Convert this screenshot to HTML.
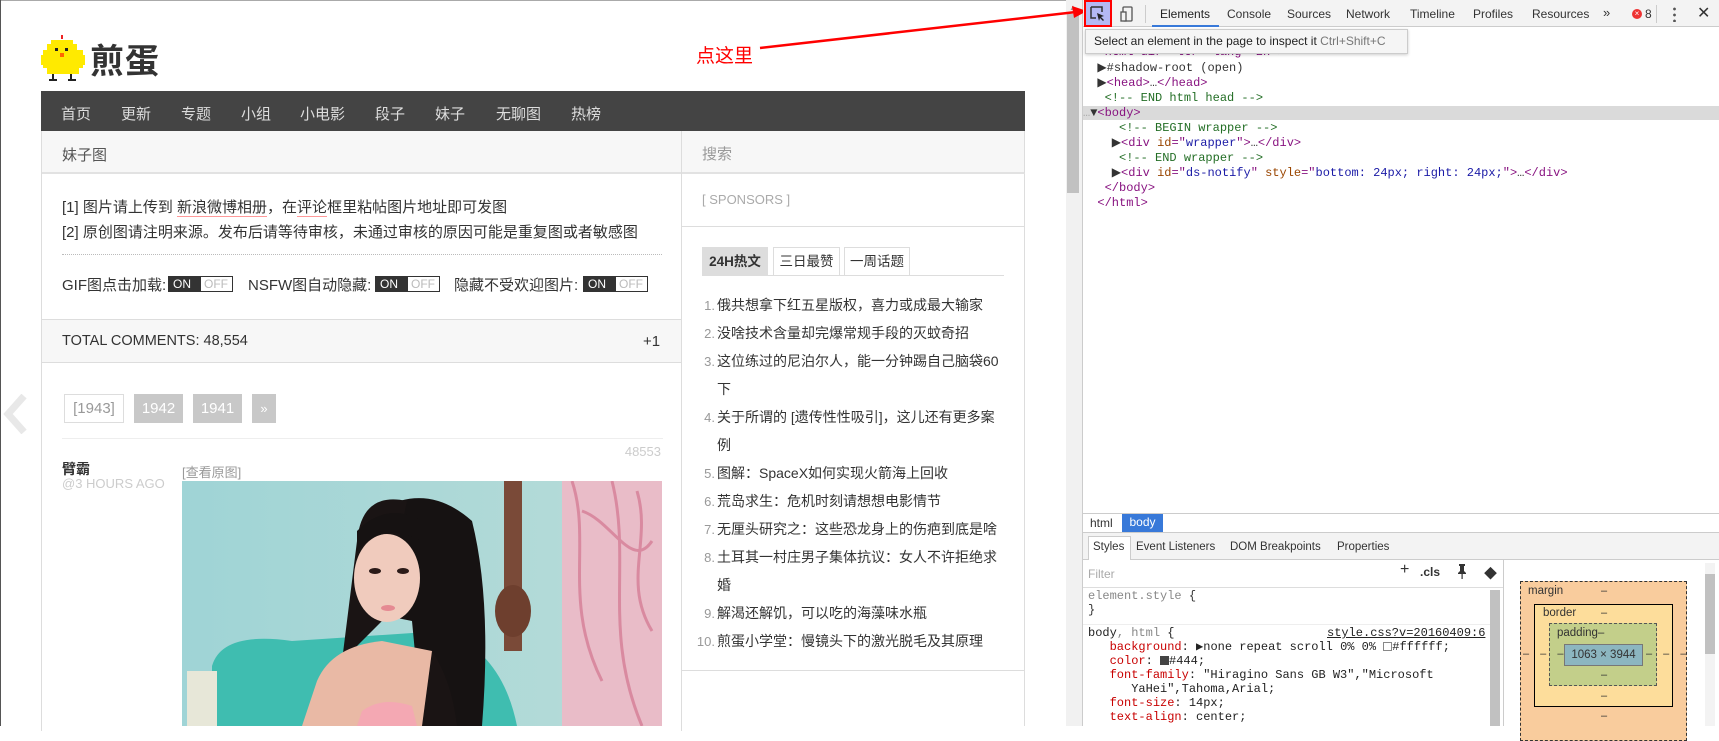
<!DOCTYPE html>
<html><head><meta charset="utf-8">
<style>
*{margin:0;padding:0;box-sizing:border-box}
body{width:1719px;height:726px;overflow:hidden;background:#fff;position:relative;font-family:"Liberation Sans","Noto Sans CJK SC",sans-serif;color:#333}
.a{position:absolute;white-space:nowrap}
.mono{font-family:"Liberation Mono","DejaVu Sans Mono",monospace;font-size:12px}
.nav span{position:absolute;top:12px;color:#ddd;font-size:15px}
.tg{position:absolute;top:276px;height:16px;width:65px;border:1px solid #333;font-size:12px;line-height:14px}
.tg b{position:absolute;left:0;top:0;width:32px;height:14px;background:#333;color:#fff;font-weight:normal;padding-left:4px}
.tg i{position:absolute;left:35px;top:0;color:#bbb;font-style:normal}
.pg{position:absolute;top:394px;height:29px;font-size:15px;line-height:29px;text-align:center;color:#fff;background:#c8c8c8}
.li{position:absolute;left:690px;width:320px;font-size:14px;line-height:28px;color:#333}
.li em{font-style:normal;color:#999;display:inline-block;width:27px;text-align:right;padding-right:2px;font-size:13px}
.dt{position:absolute;font-size:12px;color:#333;top:7px;font-family:"Liberation Sans",sans-serif}
.st{position:absolute;top:541px;font-size:11.5px;font-family:"Liberation Sans",sans-serif;color:#333}
.code{position:absolute;left:1083px;font-family:"Liberation Mono",monospace;font-size:12px;line-height:15px;white-space:pre}
.tag{color:#881280}.at{color:#994500}.av{color:#1a1aa6}.cm{color:#236e25}
.pr{color:#c80000}
</style></head><body>
<div class="a" style="left:0;top:0;width:1066px;height:1px;background:#aaa"></div>
<div class="a" style="left:0;top:0;width:1px;height:726px;background:#555"></div>

<svg class="a" style="left:41px;top:35px" width="44" height="47" viewBox="0 0 44 47">
<rect x="20" y="0" width="2" height="4" fill="#e22"/>
<rect x="10" y="5" width="22" height="4" fill="#ffea00"/>
<rect x="6" y="9" width="30" height="6" fill="#ffea00"/>
<rect x="2" y="15" width="40" height="18" fill="#ffea00"/>
<rect x="0" y="20" width="44" height="10" fill="#ffea00"/>
<rect x="6" y="33" width="32" height="6" fill="#ffea00"/>
<rect x="14" y="13" width="3" height="3" fill="#222"/><rect x="24" y="13" width="3" height="3" fill="#222"/>
<rect x="19" y="18" width="4" height="4" fill="#f60"/>
<rect x="11" y="39" width="2" height="6" fill="#222"/><rect x="29" y="39" width="2" height="6" fill="#222"/>
<rect x="8" y="44" width="8" height="2" fill="#222"/><rect x="27" y="44" width="8" height="2" fill="#222"/>
</svg>
<div class="a" style="left:90px;top:40px;font-size:34px;font-weight:bold;color:#333;letter-spacing:1px;line-height:44px">煎蛋</div>

<div class="a nav" style="left:41px;top:91px;width:984px;height:40px;background:#444">
<span style="left:20px">首页</span><span style="left:80px">更新</span><span style="left:140px">专题</span><span style="left:200px">小组</span><span style="left:259px">小电影</span><span style="left:334px">段子</span><span style="left:394px">妹子</span><span style="left:455px">无聊图</span><span style="left:530px">热榜</span>
</div>

<div class="a" style="left:41px;top:131px;width:641px;height:600px;border-left:1px solid #ddd;border-right:1px solid #ddd"></div>
<div class="a" style="left:42px;top:131px;width:639px;height:43px;background:#f7f7f7;border-bottom:2px solid #e2e2e2"></div>
<div class="a" style="left:62px;top:144px;font-size:15px;color:#555">妹子图</div>
<div class="a" style="left:62px;top:196px;font-size:15px;color:#333">[1] 图片请上传到 <span style="border-bottom:1px solid #f99">新浪微博相册</span>，在<span style="border-bottom:1px solid #f99">评论</span>框里粘帖图片地址即可发图</div>
<div class="a" style="left:62px;top:221px;font-size:15px;color:#333">[2] 原创图请注明来源。发布后请等待审核，未通过审核的原因可能是重复图或者敏感图</div>
<div class="a" style="left:62px;top:254px;width:600px;border-top:1px dotted #bbb"></div>
<div class="a" style="left:62px;top:274px;font-size:15px;color:#333">GIF图点击加载:</div>
<div class="tg" style="left:168px"><b>ON</b><i>OFF</i></div>
<div class="a" style="left:248px;top:274px;font-size:15px;color:#333">NSFW图自动隐藏:</div>
<div class="tg" style="left:375px"><b>ON</b><i>OFF</i></div>
<div class="a" style="left:454px;top:274px;font-size:15px;color:#333">隐藏不受欢迎图片:</div>
<div class="tg" style="left:583px"><b>ON</b><i>OFF</i></div>

<div class="a" style="left:42px;top:319px;width:639px;height:44px;background:#f7f7f7;border-top:1px solid #ddd;border-bottom:1px solid #ddd"></div>
<div class="a" style="left:62px;top:333px;font-size:14.5px;color:#333">TOTAL COMMENTS: 48,554</div>
<div class="a" style="left:643px;top:333px;font-size:15px;color:#333">+1</div>

<svg class="a" style="left:2px;top:394px" width="26" height="40"><path d="M22 2 L6 20 L22 38" stroke="#e8e8e8" stroke-width="7" fill="none"/></svg>
<div class="pg" style="left:64px;width:60px;background:#fff;border:1px solid #ddd;color:#999;line-height:27px">[1943]</div>
<div class="pg" style="left:134px;width:49px">1942</div>
<div class="pg" style="left:193px;width:49px">1941</div>
<div class="pg" style="left:252px;width:24px;font-size:13px">»</div>
<div class="a" style="left:62px;top:438px;width:601px;border-top:1px solid #eee"></div>
<div class="a" style="left:620px;top:444px;font-size:13px;color:#ccc;width:41px;text-align:right">48553</div>
<div class="a" style="left:62px;top:459px;font-size:14px;font-weight:bold;color:#333">臂霸</div>
<div class="a" style="left:62px;top:476px;font-size:13px;color:#ccc">@3 HOURS AGO</div>
<div class="a" style="left:182px;top:462px;font-size:13px;color:#999">[查看原图]</div>

<svg class="a" style="left:182px;top:481px" width="480" height="245" viewBox="0 0 480 245">
<defs><linearGradient id="w" x1="0" x2="1"><stop offset="0" stop-color="#9fd4d6"/><stop offset="1" stop-color="#b8dcd8"/></linearGradient></defs>
<rect width="480" height="245" fill="url(#w)"/>
<rect x="380" y="0" width="100" height="245" fill="#e9bcc8"/>
<path d="M390 0 C410 60 380 120 420 200 M430 0 C450 80 420 150 460 245 M400 30 C430 40 450 90 470 60 M455 10 C470 60 440 100 470 150" stroke="#d98aa0" stroke-width="3" fill="none"/>
<rect x="322" y="0" width="18" height="170" fill="#7a4a38"/>
<ellipse cx="331" cy="130" rx="18" ry="26" fill="#6e3f2e"/>
<path d="M30 185 Q40 150 110 160 L260 150 Q320 170 335 245 L30 245 Z" fill="#3fbdb0"/>
<rect x="5" y="190" width="30" height="55" fill="#e7e7d8"/>
<path d="M195 30 Q245 0 290 40 Q310 120 300 245 L240 245 L230 140 L180 130 Z" fill="#161212"/>
<path d="M175 60 Q180 10 225 20 L200 140 L160 180 Z" fill="#1a1414"/>
<ellipse cx="205" cy="97" rx="33" ry="44" fill="#f0cbbd"/>
<path d="M175 70 Q200 40 240 60 L240 40 Q205 20 175 50 Z" fill="#161212"/>
<ellipse cx="193" cy="90" rx="6" ry="3" fill="#2b1a18"/><ellipse cx="221" cy="90" rx="6" ry="3" fill="#2b1a18"/>
<ellipse cx="206" cy="127" rx="7" ry="3" fill="#e58a92"/>
<path d="M135 200 Q150 165 200 160 L250 170 L270 245 L120 245 Z" fill="#e9b9a5"/>
<path d="M250 170 Q270 200 275 245 L240 245 Z" fill="#1a1414"/>
<path d="M180 230 Q200 215 230 225 L235 245 L175 245 Z" fill="#f4a8b3"/>
</svg>

<div class="a" style="left:682px;top:131px;width:343px;height:43px;background:#f7f7f7;border-bottom:2px solid #e2e2e2;border-right:1px solid #ddd"></div>
<div class="a" style="left:702px;top:143px;font-size:15px;color:#999">搜索</div>
<div class="a" style="left:1024px;top:174px;width:1px;height:552px;background:#ddd"></div>
<div class="a" style="left:702px;top:192px;font-size:13px;color:#aaa">[ SPONSORS ]</div>
<div class="a" style="left:682px;top:226px;width:342px;border-top:1px solid #ddd"></div>
<div class="a" style="left:702px;top:275px;width:302px;border-top:1px solid #ddd"></div>
<div class="a" style="left:702px;top:247px;width:66px;height:29px;background:#ddd;font-size:13.5px;font-weight:bold;line-height:29px;text-align:center;color:#333">24H热文</div>
<div class="a" style="left:773px;top:247px;width:67px;height:29px;background:#fff;border:1px solid #ddd;font-size:13.5px;line-height:27px;text-align:center;color:#333">三日最赞</div>
<div class="a" style="left:844px;top:247px;width:66px;height:29px;background:#fff;border:1px solid #ddd;font-size:13.5px;line-height:27px;text-align:center;color:#333">一周话题</div>
<div class="li" style="top:291px"><em>1.</em>俄共想拿下红五星版权，喜力或成最大输家</div>
<div class="li" style="top:319px"><em>2.</em>没啥技术含量却完爆常规手段的灭蚊奇招</div>
<div class="li" style="top:347px"><em>3.</em>这位练过的尼泊尔人，能一分钟踢自己脑袋60</div>
<div class="li" style="top:375px"><em></em>下</div>
<div class="li" style="top:403px"><em>4.</em>关于所谓的 [遗传性性吸引]，这儿还有更多案</div>
<div class="li" style="top:431px"><em></em>例</div>
<div class="li" style="top:459px"><em>5.</em>图解：SpaceX如何实现火箭海上回收</div>
<div class="li" style="top:487px"><em>6.</em>荒岛求生：危机时刻请想想电影情节</div>
<div class="li" style="top:515px"><em>7.</em>无厘头研究之：这些恐龙身上的伤疤到底是啥</div>
<div class="li" style="top:543px"><em>8.</em>土耳其一村庄男子集体抗议：女人不许拒绝求</div>
<div class="li" style="top:571px"><em></em>婚</div>
<div class="li" style="top:599px"><em>9.</em>解渴还解饥，可以吃的海藻味水瓶</div>
<div class="li" style="top:627px"><em>10.</em>煎蛋小学堂：慢镜头下的激光脱毛及其原理</div>
<div class="a" style="left:682px;top:670px;width:342px;border-top:1px solid #ddd"></div>

<div class="a" style="left:1066px;top:0;width:16px;height:726px;background:#f1f1f1"></div>
<div class="a" style="left:1067px;top:14px;width:12px;height:179px;background:#c1c1c1"></div>
<div class="a" style="left:1069px;top:3px;font-size:8px;color:#999">▲</div>
<div class="a" style="left:1082px;top:0;width:1px;height:726px;background:#ccc"></div>

<div class="a" style="left:696px;top:41px;font-size:19px;color:#f00">点这里</div>
<svg class="a" style="left:0;top:0" width="1110" height="60"><line x1="760" y1="48" x2="1076" y2="12" stroke="#f00" stroke-width="2.5"/><polygon points="1087,11 1072,6 1074,18" fill="#f00"/></svg>

<div class="a" style="left:1083px;top:0;width:636px;height:27px;background:#f3f3f3;border-bottom:1px solid #ccc"></div>
<div class="a" style="left:1084px;top:0;width:28px;height:27px;background:#b4b8f3;border:2px solid #f00"></div>
<svg class="a" style="left:1090px;top:6px" width="16" height="16"><path d="M1 1h11v5M1 1v11h5" stroke="#333" stroke-width="1.5" fill="none"/><path d="M7 7l7 3-3 1 3 3-1 1-3-3-1 3z" fill="#222"/></svg>
<svg class="a" style="left:1120px;top:6px" width="14" height="16"><rect x="3" y="1" width="9" height="14" rx="1" stroke="#555" fill="none" stroke-width="1.3"/><rect x="1" y="6" width="5" height="9" stroke="#555" fill="#f3f3f3" stroke-width="1.3"/></svg>
<div class="a" style="left:1145px;top:5px;width:1px;height:18px;background:#ccc"></div>
<div class="dt" style="left:1160px;color:#222">Elements</div>
<div class="a" style="left:1152px;top:25px;width:67px;height:2px;background:#3879d9"></div>
<div class="dt" style="left:1227px">Console</div>
<div class="dt" style="left:1287px">Sources</div>
<div class="dt" style="left:1346px">Network</div>
<div class="dt" style="left:1410px">Timeline</div>
<div class="dt" style="left:1473px">Profiles</div>
<div class="dt" style="left:1532px">Resources</div>
<div class="dt" style="left:1603px;font-size:13px;top:5px">»</div>
<div class="a" style="left:1632px;top:9px;width:10px;height:10px;border-radius:50%;background:#e33;color:#fff;font-size:8px;line-height:10px;text-align:center">×</div>
<div class="dt" style="left:1645px">8</div>
<div class="a" style="left:1656px;top:5px;width:1px;height:18px;background:#ccc"></div>
<div class="a" style="left:1673px;top:6px;width:3px;height:16px;background:radial-gradient(circle,#555 1.2px,transparent 1.6px) 0 0/3px 6px"></div>
<div class="dt" style="left:1697px;font-size:16px;top:3px">✕</div>

<div class="a" style="left:1083px;top:106px;width:636px;height:14px;background:#dadada"></div>
<div class="code" style="top:45px;color:#888"><span class="tag">  &lt;html dir="ltr" lang="zh"&gt;</span></div>
<div class="code" style="top:61px"><span>  ▶#shadow-root (open)</span>
  ▶<span class="tag">&lt;head&gt;</span>…<span class="tag">&lt;/head&gt;</span>
   <span class="cm">&lt;!-- END html head --&gt;</span>
<span style="color:#aaa">…</span>▼<span class="tag">&lt;body&gt;</span>
     <span class="cm">&lt;!-- BEGIN wrapper --&gt;</span>
    ▶<span class="tag">&lt;div </span><span class="at">id</span><span class="tag">="</span><span class="av">wrapper</span><span class="tag">"&gt;</span>…<span class="tag">&lt;/div&gt;</span>
     <span class="cm">&lt;!-- END wrapper --&gt;</span>
    ▶<span class="tag">&lt;div </span><span class="at">id</span><span class="tag">="</span><span class="av">ds-notify</span><span class="tag">" </span><span class="at">style</span><span class="tag">="</span><span class="av">bottom: 24px; right: 24px;</span><span class="tag">"&gt;</span>…<span class="tag">&lt;/div&gt;</span>
   <span class="tag">&lt;/body&gt;</span>
  <span class="tag">&lt;/html&gt;</span></div>
<div class="a" style="left:1085px;top:29px;width:323px;height:25px;background:#f5f5f5;border:1px solid #ccc;box-shadow:0 1px 3px rgba(0,0,0,.2);font-size:12px;line-height:23px;padding-left:8px;font-family:'Liberation Sans',sans-serif;color:#222">Select an element in the page to inspect it <span style="color:#777">Ctrl+Shift+C</span></div>

<div class="a" style="left:1083px;top:513px;width:636px;height:20px;border-top:1px solid #ccc;border-bottom:1px solid #ccc;background:#fff"></div>
<div class="a" style="left:1090px;top:516px;font-size:12px">html</div>
<div class="a" style="left:1122px;top:514px;width:41px;height:18px;background:#3879d9;color:#fff;font-size:12px;line-height:17px;text-align:center">body</div>
<div class="a" style="left:1083px;top:533px;width:636px;height:27px;background:#f3f3f3;border-bottom:1px solid #ccc"></div>
<div class="a" style="left:1088px;top:536px;width:43px;height:24px;background:#fff;border:1px solid #ccc;border-bottom:none"></div>
<div class="st" style="left:1093px">Styles</div>
<div class="st" style="left:1136px">Event Listeners</div>
<div class="st" style="left:1230px">DOM Breakpoints</div>
<div class="st" style="left:1337px">Properties</div>
<div class="a" style="left:1088px;top:567px;font-size:12px;color:#aaa">Filter</div>
<div class="a" style="left:1400px;top:561px;font-size:16px;color:#333">+</div>
<div class="a" style="left:1420px;top:565px;font-size:12px;font-weight:bold;color:#333">.cls</div>
<svg class="a" style="left:1456px;top:563px" width="12" height="16"><path d="M3 1h6v2h-1v5l2 2v1H2v-1l2-2V3H3z" fill="#333"/><rect x="5.5" y="11" width="1.2" height="5" fill="#333"/></svg>
<div class="a" style="left:1484px;top:563px;font-size:13px;color:#333">◆</div>
<div class="a" style="left:1083px;top:587px;width:420px;border-top:1px solid #ddd"></div>
<div class="a" style="left:1503px;top:559px;width:1px;height:167px;background:#ccc"></div>
<div class="a" style="left:1490px;top:590px;width:10px;height:136px;background:#c1c1c1"></div>
<div class="mono a" style="left:1088px;top:589px;line-height:14px;white-space:pre;color:#333"><span style="color:#888">element.style</span> {
}</div>
<div class="a" style="left:1083px;top:624px;width:407px;border-top:1px solid #eee"></div>
<div class="mono a" style="left:1088px;top:626px;line-height:14px;white-space:pre;color:#222">body<span style="color:#888">, html</span> {
   <span class="pr">background</span>: ▶none repeat scroll 0% 0% <span style="display:inline-block;width:9px;height:9px;border:1px solid #888;vertical-align:-1px"></span>#ffffff;
   <span class="pr">color</span>: <span style="display:inline-block;width:9px;height:9px;background:#444;vertical-align:-1px"></span>#444;
   <span class="pr">font-family</span>: "Hiragino Sans GB W3","Microsoft
      YaHei",Tahoma,Arial;
   <span class="pr">font-size</span>: 14px;
   <span class="pr">text-align</span>: center;</div>
<div class="mono a" style="left:1327px;top:626px;color:#222;text-decoration:underline">style.css?v=20160409:6</div>

<div class="a" style="left:1520px;top:581px;width:167px;height:160px;background:#f9cc9d;border:1px dashed #333"></div>
<div class="a" style="left:1534px;top:604px;width:139px;height:103px;background:#fddd9b;border:1px solid #000"></div>
<div class="a" style="left:1549px;top:623px;width:108px;height:63px;background:#c3cf8a;border:1px dashed #555"></div>
<div class="a" style="left:1564px;top:644px;width:79px;height:22px;background:#8cb6c0;border:1px solid #777;font-size:11.5px;line-height:20px;text-align:center">1063 × 3944</div>
<div class="a" style="left:1528px;top:585px;font-size:11.5px">margin</div>
<div class="a" style="left:1601px;top:585px;font-size:11px">–</div>
<div class="a" style="left:1543px;top:607px;font-size:11.5px">border</div>
<div class="a" style="left:1601px;top:607px;font-size:11px">–</div>
<div class="a" style="left:1557px;top:627px;font-size:11.5px">padding–</div>
<div class="a" style="left:1523px;top:648px;font-size:11px;letter-spacing:4px">– – –</div>
<div class="a" style="left:1646px;top:648px;font-size:11px;letter-spacing:4px">– – –</div>
<div class="a" style="left:1601px;top:669px;font-size:11px">–</div>
<div class="a" style="left:1601px;top:690px;font-size:11px">–</div>
<div class="a" style="left:1601px;top:710px;font-size:11px">–</div>
<div class="a" style="left:1705px;top:563px;width:10px;height:163px;background:#f3f3f3"></div>
<div class="a" style="left:1705px;top:574px;width:10px;height:80px;background:#c1c1c1"></div>
</body></html>
